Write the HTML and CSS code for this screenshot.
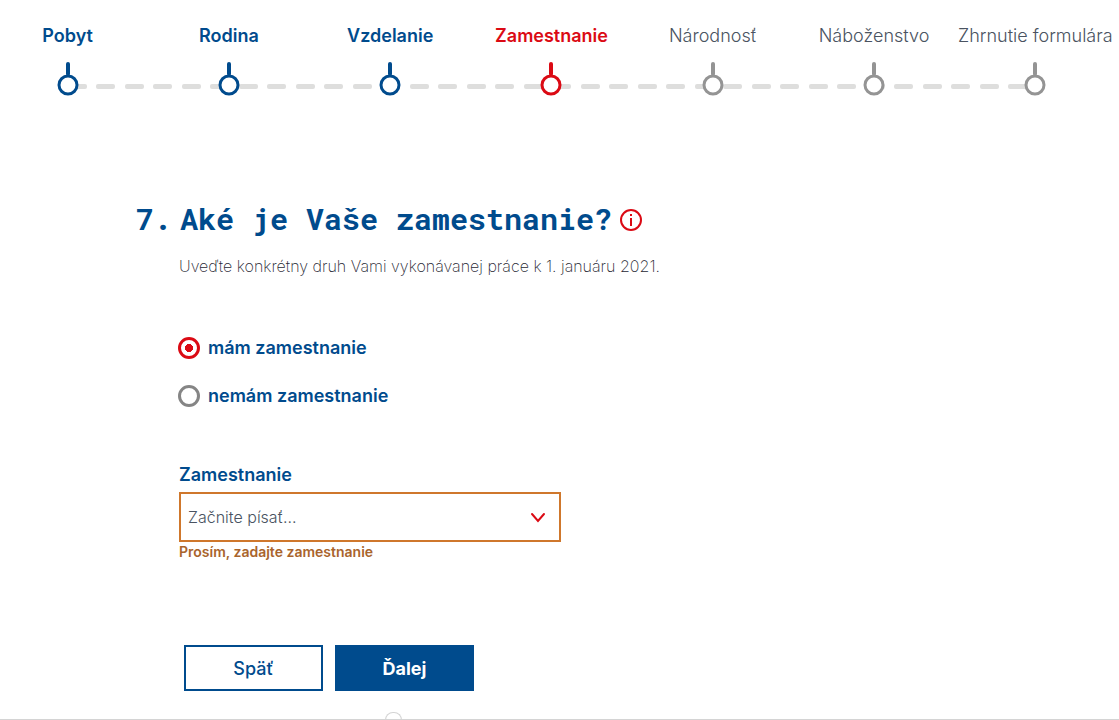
FILE: index.html
```html
<!DOCTYPE html>
<html lang="sk">
<head>
<meta charset="utf-8">
<meta name="viewport" content="width=device-width, initial-scale=1">
<title>Zamestnanie</title>
<link rel="stylesheet" href="styles.css">
</head>
<body>
<nav class="progress" aria-label="Postup">
  <svg class="track" aria-hidden="true">
    <defs>
      <pattern id="dashes" width="57" height="5" patternUnits="userSpaceOnUse">
        <rect width="19" height="5" rx="2"/>
        <rect x="28" width="19" height="5" rx="2"/>
      </pattern>
    </defs>
    <rect width="100%" height="5" fill="url(#dashes)"/>
  </svg>
  <ol class="steps">
    <li class="step done"><span class="step-name">Pobyt</span><svg class="pin" viewBox="0 0 22 34"><path d="M11 2v10"/><circle cx="11" cy="23" r="9"/></svg></li>
    <li class="step done"><span class="step-name">Rodina</span><svg class="pin" viewBox="0 0 22 34"><path d="M11 2v10"/><circle cx="11" cy="23" r="9"/></svg></li>
    <li class="step done"><span class="step-name">Vzdelanie</span><svg class="pin" viewBox="0 0 22 34"><path d="M11 2v10"/><circle cx="11" cy="23" r="9"/></svg></li>
    <li class="step current" aria-current="step"><span class="step-name">Zamestnanie</span><svg class="pin" viewBox="0 0 22 34"><path d="M11 2v10"/><circle cx="11" cy="23" r="9"/></svg></li>
    <li class="step"><span class="step-name">Národnosť</span><svg class="pin" viewBox="0 0 22 34"><path d="M11 2v10"/><circle cx="11" cy="23" r="9"/></svg></li>
    <li class="step"><span class="step-name">Náboženstvo</span><svg class="pin" viewBox="0 0 22 34"><path d="M11 2v10"/><circle cx="11" cy="23" r="9"/></svg></li>
    <li class="step"><span class="step-name">Zhrnutie formulára</span><svg class="pin" viewBox="0 0 22 34"><path d="M11 2v10"/><circle cx="11" cy="23" r="9"/></svg></li>
  </ol>
</nav>
<main class="question">
  <header class="heading">
    <span class="number">7.</span>
    <h1 class="title" id="title">Aké je Vaše zamestnanie?</h1>
    <button class="info" type="button" aria-label="Informácie">
      <svg class="info-icon" viewBox="0 0 24 24"><circle cx="12" cy="13" r="10"/><path d="M12 11v8M12 7v2"/></svg>
    </button>
  </header>
  <form class="form">
    <p class="hint">Uveďte konkrétny druh Vami vykonávanej práce k 1. januáru 2021.</p>
    <div class="options" role="radiogroup" aria-labelledby="title">
      <label class="option"><input class="radio" type="radio" name="job" checked>mám zamestnanie</label>
      <label class="option"><input class="radio" type="radio" name="job">nemám zamestnanie</label>
    </div>
    <div class="field">
      <label class="field-label" for="job-name">Zamestnanie</label>
      <div class="combo">
        <input class="combo-input" id="job-name" type="text" placeholder="Začnite písať..." aria-describedby="job-error">
        <button class="combo-toggle" type="button" aria-label="Zobraziť možnosti">
          <svg class="chevron" viewBox="0 0 16 12"><path d="M2 3l6 7 6-7"/></svg>
        </button>
      </div>
      <p class="error" id="job-error">Prosím, zadajte zamestnanie</p>
    </div>
    <div class="actions">
      <button class="button" type="button">Späť</button>
      <button class="button primary" type="submit">Ďalej</button>
    </div>
  </form>
</main>
<footer class="footer"><span class="knob"></span></footer>
</body>
</html>
```
FILE: styles.css
```css
* { box-sizing: border-box; }

body {
  margin: 0;
  overflow-x: hidden;
  background: #fff;
  color: #475569;
  font-family: Inter, "Noto Sans", sans-serif;
  font-size: 16px;
}

button, input { font: inherit; }

.progress {
  position: relative;
  margin: 0 3px 0 -13px;
  padding-top: 24px;
}

.track {
  position: absolute;
  top: 84px;
  left: calc(100% / 14);
  width: calc(100% * 6 / 7);
  height: 5px;
  fill: #dededd;
}

.steps {
  position: relative;
  display: grid;
  grid-template-columns: repeat(7, 1fr);
  margin: 0;
  padding: 0;
  list-style: none;
}

.step {
  display: flex;
  flex-direction: column;
  align-items: center;
  gap: 14px;
  color: #949494;
}

.step-name {
  color: #4a5361;
  font-size: 18px;
  font-weight: 300;
  line-height: 24px;
  white-space: nowrap;
}

.done { color: #004b8d; }
.current { color: #db0a14; }

.done .step-name,
.current .step-name {
  color: inherit;
  font-weight: 600;
}

.pin {
  width: 22px;
  height: 34px;
  fill: #fff;
  stroke: currentColor;
  stroke-width: 3;
}

.pin path { stroke-width: 4; stroke-linecap: round; }

.question { padding: 103px 40px 0 136px; }

.heading {
  display: flex;
  align-items: center;
  color: #004b8d;
  font: 700 30px/40px "Roboto Mono", "DejaVu Sans Mono", monospace;
}

.number { width: 44px; }

.title { margin: 0; font: inherit; }

.info {
  display: flex;
  margin-left: 7px;
  padding: 0;
  border: 0;
  background: none;
}

.info-icon {
  width: 24px;
  height: 24px;
  fill: none;
  stroke: #db0a14;
  stroke-width: 2;
}

.form { padding-left: 43px; }

.hint {
  margin: 15px 0 0;
  color: #1f2733;
  font-weight: 200;
  line-height: 24px;
}

.options {
  display: grid;
  justify-items: start;
  gap: 24px;
  margin-top: 58px;
}

.option {
  display: flex;
  align-items: center;
  gap: 8px;
  color: #004b8d;
  font-size: 18px;
  font-weight: 600;
  line-height: 24px;
}

.radio {
  appearance: none;
  width: 22px;
  height: 22px;
  margin: 0 0 0 -1px;
  border: 3px solid #858585;
  border-radius: 50%;
}

.radio:checked {
  border-color: #db0a14;
  background: radial-gradient(circle, #db0a14 4px, #fff 4px);
}

.field {
  max-width: 382px;
  margin-top: 54px;
}

.field-label {
  display: block;
  color: #004b8d;
  font-size: 18px;
  font-weight: 600;
  line-height: 26px;
}

.combo {
  display: flex;
  height: 50px;
  margin-top: 4px;
  border: 2px solid #cf772c;
}

.combo-input {
  flex: 1;
  min-width: 0;
  padding: 0 7px;
  border: 0;
  outline: 0;
  background: none;
  font-weight: 300;
}

.combo-input::placeholder { color: #4a5361; }

.combo-toggle {
  display: flex;
  align-items: center;
  justify-content: center;
  width: 42px;
  padding: 0;
  border: 0;
  background: none;
}

.chevron {
  width: 16px;
  height: 12px;
  fill: none;
  stroke: #db0a14;
  stroke-width: 2;
  stroke-linecap: round;
}

.error {
  margin: 0;
  color: #a9642c;
  font-size: 14px;
  font-weight: 600;
  line-height: 20px;
}

.actions {
  display: flex;
  gap: 12px;
  margin-top: 83px;
  padding-left: 5px;
}

.button {
  width: 139px;
  height: 46px;
  border: 2px solid #004b8d;
  background: #fff;
  color: #004b8d;
  font-size: 18px;
  font-weight: 500;
}

.primary {
  background: #004b8d;
  color: #fff;
  font-weight: 700;
}

.footer {
  position: relative;
  margin-top: 28px;
  border-top: 1px solid #d4d4d4;
}

.knob {
  position: absolute;
  bottom: 0;
  left: 385px;
  width: 17px;
  height: 8px;
  border: 1px solid #d4d4d4;
  border-bottom: 0;
  border-radius: 9px 9px 0 0;
}
```
